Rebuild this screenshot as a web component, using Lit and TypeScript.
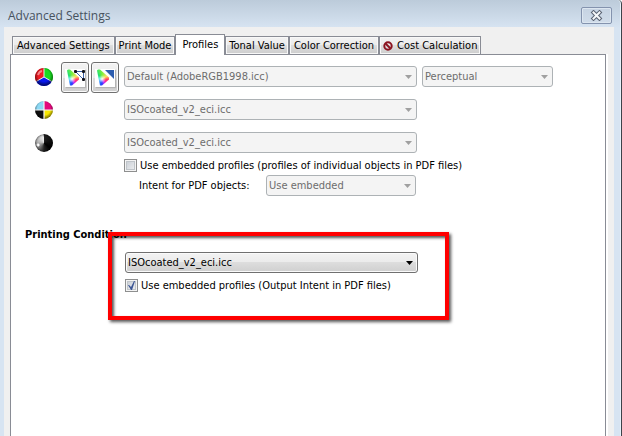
import { LitElement, html, css, svg, nothing } from "lit";
import { customElement, property, state } from "lit/decorators.js";
import { classMap } from "lit/directives/class-map.js";

const TABS = [
  "Advanced Settings",
  "Print Mode",
  "Profiles",
  "Tonal Value",
  "Color Correction",
  "Cost Calculation",
];

@customElement("profile-select")
class ProfileSelect extends LitElement {
  @property() value = "";
  @property() label = "";
  @property({ type: Boolean, reflect: true }) disabled = false;

  static styles = css`
    :host {
      display: block;
      position: relative;
      height: 21px;
    }
    :host::after {
      content: "";
      position: absolute;
      top: 9px;
      right: 5px;
      width: 7px;
      height: 4px;
      background: #000;
      clip-path: polygon(0 0, 100% 0, 50% 100%);
      pointer-events: none;
    }
    :host([disabled])::after {
      background: #a0a0a0;
    }
    .field {
      appearance: none;
      box-sizing: border-box;
      width: 100%;
      height: 21px;
      margin: 0;
      padding: 0 16px 0 2px;
      border: 1px solid #707070;
      border-radius: 3px;
      background: linear-gradient(#f3f3f3, #ebebeb 50%, #dddddd 50%, #cfcfcf);
      box-shadow: inset 0 0 0 1px #fafafa;
      color: #000;
      font: inherit;
    }
    .field:disabled {
      border-color: #adb2b5;
      background: #f4f4f4;
      box-shadow: none;
      color: #6d6d6d;
      opacity: 1;
    }
  `;

  render() {
    return html`<select class="field" aria-label=${this.label} ?disabled=${this.disabled}>
      <option>${this.value}</option>
    </select>`;
  }
}

@customElement("gamut-icon")
class GamutIcon extends LitElement {
  @property() kind: "nodes" | "corner" = "nodes";

  static styles = css`
    :host {
      display: block;
      position: relative;
      width: 20px;
      height: 18px;
      background: #fff;
      box-shadow: 1px 1px 1px #b4b4b4;
    }
    .spectrum {
      width: 20px;
      height: 18px;
      background: radial-gradient(circle at 7px 10px, #fff 0, #fff0 4px), conic-gradient(from 0deg at 7px 10px, #7cf03c, #ffe060 60deg, #ff4060 95deg, #ff20a0 125deg, #b030ff 155deg, #2838ff 180deg, #20a8ff 240deg, #20e8d0 280deg, #20e070 320deg, #7cf03c);
      clip-path: polygon(2px 2px, 3px 1px, 5px 1px, 14px 9px, 14px 11px, 7px 17px, 5px 17px);
    }
    .overlay {
      position: absolute;
      inset: 0;
      overflow: visible;
    }
  `;

  render() {
    return html`<div class="spectrum"></div>
      <svg class="overlay" width="20" height="18" viewBox="0 0 20 18">
        ${this.kind === "nodes"
          ? svg`<path d="M10.500 2.500H18.500V10.500Z" fill="#fff" fill-opacity=".7" stroke="#3a62a8" stroke-width="1"/>
              <rect x="9" y="1" width="3" height="3" rx="1" fill="#101018"/>
              <rect x="17" y="1" width="3" height="3" rx="1" fill="#101018"/>
              <rect x="17" y="9" width="3" height="3" rx="1" fill="#101018"/>`
          : svg`<path d="M10 1H19V10Z" fill="#2c5cae"/>`}
      </svg>`;
  }
}

@customElement("app-root")
class AppRoot extends LitElement {
  @state() private active = "Profiles";

  static styles = css`
    :host {
      display: block;
      color: #000;
      font: 11px/15px "DejaVu Sans Condensed", "Noto Sans", sans-serif;
    }
    .window {
      box-sizing: border-box;
      display: flex;
      flex-direction: column;
      min-height: 100vh;
      padding: 0 7px 0 4px;
      border-right: 1px solid #3d434a;
      border-top-right-radius: 4px;
      background: linear-gradient(#bccbda, #d7e4f2 28px);
      box-shadow: inset -1px 0 0 #e8f1fa;
    }
    .titlebar {
      display: flex;
      align-items: center;
      justify-content: space-between;
      height: 27px;
      padding: 4px 2px 0 4px;
      box-sizing: border-box;
    }
    .title {
      margin: 0;
      color: #47525e;
      font: 12px/16px "Open Sans", sans-serif;
    }
    .close {
      display: grid;
      place-items: center;
      box-sizing: border-box;
      width: 31px;
      height: 17px;
      padding: 0;
      border: 1px solid #8493ae;
      border-radius: 2px;
      background: linear-gradient(#c6d3e2, #d0dcea);
      box-shadow: inset 0 0 0 1px #dce6f0;
    }
    .body {
      display: flex;
      flex: 1;
      flex-direction: column;
      padding: 7px 6px 0;
      background: #f0f0f0;
    }
    .tabs {
      display: flex;
      align-items: flex-end;
      height: 20px;
      padding-left: 2px;
    }
    .tab {
      display: flex;
      align-items: center;
      gap: 4px;
      box-sizing: border-box;
      height: 18px;
      padding: 0 4px;
      border: 1px solid #898c95;
      border-bottom: 0;
      background: linear-gradient(#f3f3f3, #ebebeb 50%, #dddddd 50%, #cdcdcd);
      box-shadow: inset 0 0 0 1px #f8f8f8;
      color: #000;
      font: inherit;
      white-space: nowrap;
    }
    .tab:nth-child(even) {
      padding: 0 3px;
    }
    .tab.active {
      position: relative;
      z-index: 1;
      height: 21px;
      margin-bottom: -1px;
      padding: 0 6px 2px;
      background: #fff;
      box-shadow: none;
    }
    .panel {
      flex: 1;
      padding: 5px 24px 0;
      margin-right: 2px;
      border: 1px solid #898c95;
      border-bottom: 0;
      background: #fff;
      box-shadow: 2px 0 0 #fff;
    }
    .row {
      display: grid;
      grid-template-columns: 18px 61px minmax(0, 293px) minmax(0, 131px);
      align-items: center;
      height: 33px;
      column-gap: 5px;
    }
    .picks {
      display: flex;
      gap: 2px;
      padding: 2px 0 0 3px;
    }
    .pick {
      display: grid;
      place-items: center;
      box-sizing: border-box;
      width: 29px;
      height: 31px;
      padding: 0;
      border: 1px solid #707070;
      border-radius: 3px;
      background: linear-gradient(#f3f3f3, #ebebeb 50%, #dddddd 50%, #cfcfcf);
      box-shadow: inset 0 0 0 1px #fafafa;
    }
    .ball {
      display: block;
    }
    .gray {
      width: 18px;
      height: 18px;
      border-radius: 50%;
      background: radial-gradient(circle at 3px 11px, #fff 1px, transparent 2px), conic-gradient(#222 0deg, #000 130deg, #222 180deg, #777 225deg, #b8b8b8 280deg, #eee 355deg, #222 360deg);
      box-shadow: inset 0 0 2px 1px #0008;
    }
    .options {
      padding-left: 89px;
    }
    .check {
      display: flex;
      align-items: center;
      gap: 3px;
      height: 13px;
      white-space: nowrap;
    }
    .box {
      appearance: none;
      display: grid;
      place-items: center;
      box-sizing: border-box;
      width: 13px;
      height: 13px;
      margin: 0;
      border: 1px solid #8e8f8f;
      background: linear-gradient(135deg, #c4cad2, #f2f3f4);
      box-shadow: inset 0 0 0 1px #f4f4f4, inset 0 0 0 2px #c0c5ca;
    }
    .box:checked::after {
      content: "";
      width: 9px;
      height: 9px;
      background: #3c5594;
      clip-path: polygon(1px 4px, 2px 4px, 4px 6px, 7px 0, 8px 0, 5px 9px, 4px 9px);
    }
    .intent {
      display: grid;
      grid-template-columns: 122px minmax(0, 150px);
      align-items: center;
      column-gap: 5px;
      padding: 3px 0 0 15px;
    }
    .heading {
      margin: 31px 0 0 -10px;
      font: bold 11px/15px "DejaVu Sans Condensed", "Noto Sans", sans-serif;
    }
    .output {
      position: relative;
      display: grid;
      grid-template-columns: minmax(0, 293px);
      row-gap: 6px;
      padding: 10px 0 0 90px;
    }
    .output::after {
      content: "";
      position: absolute;
      top: -10px;
      left: 73px;
      box-sizing: border-box;
      width: 341px;
      height: 88px;
      border: 4px solid #f00;
      box-shadow: 2px 2px 3px #000a, inset 2px 2px 3px #000a;
      pointer-events: none;
    }
  `;

  private tab(name: string) {
    const on = name === this.active;
    return html`<button
      class=${classMap({ tab: true, active: on })}
      role="tab"
      aria-selected=${on ? "true" : "false"}
      @click=${() => (this.active = name)}
    >
      ${name === "Cost Calculation"
        ? html`<svg width="10" height="10" viewBox="0 0 10 10" fill="none" stroke="#8c1420" stroke-width="2">
            <circle cx="5" cy="5" r="3.700" />
            <path d="M2.500 2.500L7.500 7.500" />
          </svg>`
        : nothing}
      ${name}
    </button>`;
  }

  private rgbBall() {
    return html`<svg class="ball" width="18" height="18" viewBox="0 0 18 18" role="img" aria-label="RGB">
      <defs>
        <radialGradient id="shade" cx=".5" cy=".42" r=".6">
          <stop offset=".55" stop-color="#000" stop-opacity="0" />
          <stop offset="1" stop-color="#000" stop-opacity=".7" />
        </radialGradient>
      </defs>
      <path d="M9 9V0A9 9 0 0 0 1.200 13.500Z" fill="#f01c24" />
      <path d="M9 9V0A9 9 0 0 1 16.800 13.500Z" fill="#18dc20" />
      <path d="M9 9L16.800 13.500A9 9 0 0 1 1.200 13.500Z" fill="#0818f0" />
      <path d="M9 0V9L1.200 13.500M9 9L16.800 13.500" fill="none" stroke="#e8e8e8" stroke-width="1" />
      <circle cx="9" cy="9" r="9" fill="url(#shade)" />
      <path d="M3 7Q4 3.500 7 3" fill="none" stroke="#fff" stroke-opacity=".45" stroke-width="2" />
    </svg>`;
  }

  private cmykBall() {
    return html`<svg class="ball" width="18" height="18" viewBox="0 0 18 18" role="img" aria-label="CMYK">
      <defs>
        <radialGradient id="shade4" cx=".5" cy=".42" r=".6">
          <stop offset=".6" stop-color="#000" stop-opacity="0" />
          <stop offset="1" stop-color="#000" stop-opacity=".65" />
        </radialGradient>
      </defs>
      <path d="M9 9V0A9 9 0 0 0 0 9Z" fill="#8cd8f4" />
      <path d="M9 9V0A9 9 0 0 1 18 9Z" fill="#e4087c" />
      <path d="M9 9H0A9 9 0 0 0 9 18Z" fill="#101010" />
      <path d="M9 9H18A9 9 0 0 1 9 18Z" fill="#f8e800" />
      <circle cx="9" cy="9" r="9" fill="url(#shade4)" />
      <path d="M9 0V18M0 9H18" stroke="#f4f4f4" stroke-width="1.200" />
    </svg>`;
  }

  render() {
    return html`<main class="window">
      <header class="titlebar">
        <h1 class="title">Advanced Settings</h1>
        <button class="close" aria-label="Close">
          <svg width="13" height="11" viewBox="0 0 13 11" fill="none">
            <path d="M3.500 2.500L9.500 8.500M9.500 2.500L3.500 8.500" stroke="#596171" stroke-width="4" stroke-linecap="square" />
            <path d="M3.500 2.500L9.500 8.500M9.500 2.500L3.500 8.500" stroke="#f6f8fa" stroke-width="2" stroke-linecap="square" />
          </svg>
        </button>
      </header>
      <div class="body">
        <nav class="tabs" role="tablist">${TABS.map((t) => this.tab(t))}</nav>
        <section class="panel">
          <div class="row">
            ${this.rgbBall()}
            <div class="picks">
              <button class="pick" aria-label="Edit gamut"><gamut-icon kind="nodes"></gamut-icon></button>
              <button class="pick" aria-label="Gamut corner"><gamut-icon kind="corner"></gamut-icon></button>
            </div>
            <profile-select disabled label="RGB profile" value="Default (AdobeRGB1998.icc)"></profile-select>
            <profile-select disabled label="Rendering intent" value="Perceptual"></profile-select>
          </div>
          <div class="row">
            ${this.cmykBall()}
            <span></span>
            <profile-select disabled label="CMYK profile" value="ISOcoated_v2_eci.icc"></profile-select>
          </div>
          <div class="row">
            <div class="gray" role="img" aria-label="Gray"></div>
            <span></span>
            <profile-select disabled label="Gray profile" value="ISOcoated_v2_eci.icc"></profile-select>
          </div>
          <div class="options">
            <label class="check">
              <input class="box" type="checkbox" />
              Use embedded profiles (profiles of individual objects in PDF files)
            </label>
            <div class="intent">
              <span>Intent for PDF objects:</span>
              <profile-select disabled label="Intent for PDF objects" value="Use embedded"></profile-select>
            </div>
          </div>
          <h2 class="heading">Printing Condition</h2>
          <div class="output">
            <profile-select label="Printing condition" value="ISOcoated_v2_eci.icc"></profile-select>
            <label class="check">
              <input class="box" type="checkbox" checked />
              Use embedded profiles (Output Intent in PDF files)
            </label>
          </div>
        </section>
      </div>
    </main>`;
  }
}
